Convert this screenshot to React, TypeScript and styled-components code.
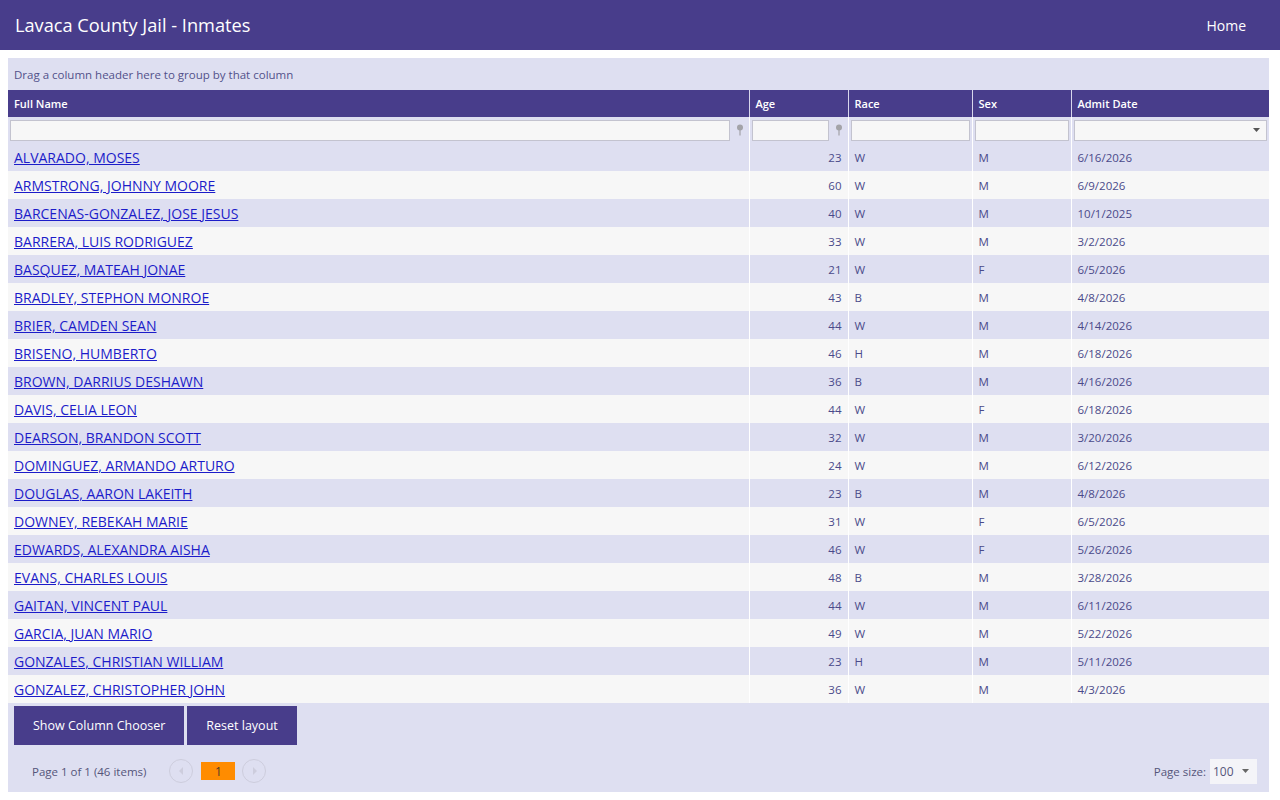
import React from 'react'
import styled, {createGlobalStyle} from 'styled-components'

const PURPLE = '#483d8b'
const LAVENDER = '#dedff1'
const LIGHT = '#f7f7f7'
const FONT = `'Open Sans', 'Noto Sans', 'Liberation Sans', sans-serif`

const GlobalStyle = createGlobalStyle`
  body {
    margin: 0;
    background: #fff;
    font-family: ${FONT};
  }
`

type Inmate = {name: string; age: number; race: string; sex: string; admit: string}

const inmates: Inmate[] = [
  {name: 'ALVARADO, MOSES', age: 23, race: 'W', sex: 'M', admit: '6/16/2026'},
  {name: 'ARMSTRONG, JOHNNY MOORE', age: 60, race: 'W', sex: 'M', admit: '6/9/2026'},
  {name: 'BARCENAS-GONZALEZ, JOSE JESUS', age: 40, race: 'W', sex: 'M', admit: '10/1/2025'},
  {name: 'BARRERA, LUIS RODRIGUEZ', age: 33, race: 'W', sex: 'M', admit: '3/2/2026'},
  {name: 'BASQUEZ, MATEAH JONAE', age: 21, race: 'W', sex: 'F', admit: '6/5/2026'},
  {name: 'BRADLEY, STEPHON MONROE', age: 43, race: 'B', sex: 'M', admit: '4/8/2026'},
  {name: 'BRIER, CAMDEN SEAN', age: 44, race: 'W', sex: 'M', admit: '4/14/2026'},
  {name: 'BRISENO, HUMBERTO', age: 46, race: 'H', sex: 'M', admit: '6/18/2026'},
  {name: 'BROWN, DARRIUS DESHAWN', age: 36, race: 'B', sex: 'M', admit: '4/16/2026'},
  {name: 'DAVIS, CELIA LEON', age: 44, race: 'W', sex: 'F', admit: '6/18/2026'},
  {name: 'DEARSON, BRANDON SCOTT', age: 32, race: 'W', sex: 'M', admit: '3/20/2026'},
  {name: 'DOMINGUEZ, ARMANDO ARTURO', age: 24, race: 'W', sex: 'M', admit: '6/12/2026'},
  {name: 'DOUGLAS, AARON LAKEITH', age: 23, race: 'B', sex: 'M', admit: '4/8/2026'},
  {name: 'DOWNEY, REBEKAH MARIE', age: 31, race: 'W', sex: 'F', admit: '6/5/2026'},
  {name: 'EDWARDS, ALEXANDRA AISHA', age: 46, race: 'W', sex: 'F', admit: '5/26/2026'},
  {name: 'EVANS, CHARLES LOUIS', age: 48, race: 'B', sex: 'M', admit: '3/28/2026'},
  {name: 'GAITAN, VINCENT PAUL', age: 44, race: 'W', sex: 'M', admit: '6/11/2026'},
  {name: 'GARCIA, JUAN MARIO', age: 49, race: 'W', sex: 'M', admit: '5/22/2026'},
  {name: 'GONZALES, CHRISTIAN WILLIAM', age: 23, race: 'H', sex: 'M', admit: '5/11/2026'},
  {name: 'GONZALEZ, CHRISTOPHER JOHN', age: 36, race: 'W', sex: 'M', admit: '4/3/2026'},
]

const TopBar = styled.header`
  height: 50px;
  background: ${PURPLE};
  display: flex;
  align-items: center;
  justify-content: space-between;
  padding: 0 34px 0 15px;
  color: #fff;
`

const Title = styled.h1`
  margin: 0;
  font-size: 18.2px;
  font-weight: 400;
`

const NavLink = styled.a`
  font-size: 14px;
  color: #fff;
  text-decoration: none;
`

const Grid = styled.div`
  width: 1261px;
  margin: 8px 0 0 8px;
  background: ${LAVENDER};
  color: #4a4a8a;
`

const GroupPanel = styled.div`
  height: 32px;
  display: flex;
  align-items: center;
  padding-left: 6px;
  font-size: 11.5px;
  color: #52518a;
`

const Table = styled.table`
  width: 100%;
  table-layout: fixed;
  border-collapse: collapse;
  font-size: 11.5px;
`

const HeadCell = styled.th`
  height: 27px;
  padding: 0 6px;
  text-align: left;
  background: ${PURPLE};
  color: #fff;
  font-size: 11px;
  font-weight: 600;
  border-left: 1px solid #d8d6ec;
  &:first-child {
    border-left: none;
  }
`

const FilterCell = styled.td`
  height: 26px;
  padding: 0 2px;
  background: ${LAVENDER};
  border-left: 1px solid #fff;
  &:first-child {
    border-left: none;
  }
`

const FilterBox = styled.div`
  display: flex;
  align-items: center;
  gap: 3px;
`

const FilterInput = styled.div`
  flex: 1;
  height: 19px;
  background: #f7f7f7;
  border: 1px solid #c3c3cf;
  display: flex;
  align-items: center;
  justify-content: flex-end;
  padding-right: 6px;
`

const PinWrap = styled.span`
  width: 14px;
  display: flex;
  justify-content: center;
`

const Row = styled.tr<{$alt: boolean}>`
  background: ${({$alt}) => ($alt ? LIGHT : LAVENDER)};
`

const Cell = styled.td<{$right?: boolean}>`
  height: 28px;
  padding: 0 6px;
  text-align: ${({$right}) => ($right ? 'right' : 'left')};
  border-left: 1px solid #fff;
  white-space: nowrap;
  &:first-child {
    border-left: none;
  }
`

const NameLink = styled.a`
  font-size: 14px;
  color: #1c1cc9;
  text-decoration: underline;
`

const Footer = styled.div`
  padding: 3px 6px 0;
`

const ButtonRow = styled.div`
  display: flex;
  gap: 3px;
`

const ActionButton = styled.button`
  height: 39px;
  padding: 0 19px;
  border: none;
  background: ${PURPLE};
  color: #fff;
  font-family: ${FONT};
  font-size: 12.5px;
`

const Pager = styled.div`
  height: 42px;
  margin-top: 5px;
  display: flex;
  align-items: center;
  padding-left: 24px;
  padding-right: 12px;
  font-size: 11.5px;
  color: #55557a;
`

const PagerSummary = styled.span`
  margin-right: 23px;
`

const CircleButton = styled.span`
  width: 24px;
  height: 24px;
  border-radius: 50%;
  border: 1.5px solid #cdcddd;
  box-sizing: border-box;
  display: flex;
  align-items: center;
  justify-content: center;
`

const CurrentPage = styled.span`
  width: 34px;
  height: 18px;
  margin: 0 7px 0 8px;
  background: #ff8c00;
  color: #4d3a2a;
  font-size: 12px;
  display: flex;
  align-items: center;
  justify-content: center;
`

const Spacer = styled.span`
  flex: 1;
`

const PageSize = styled.div`
  display: flex;
  align-items: center;
  gap: 4px;
`

const SizeSelect = styled.div`
  width: 47px;
  height: 25px;
  background: #f4f4f8;
  display: flex;
  align-items: center;
  justify-content: space-between;
  padding: 0 8px 0 3px;
  box-sizing: border-box;
  font-size: 12px;
`

const Pin = () => (
  <svg width="8" height="12" viewBox="0 0 8 12">
    <circle cx="4" cy="3.5" r="3" fill="#a3a3a8" />
    <rect x="3.4" y="6" width="1.2" height="5.5" fill="#a3a3a8" />
  </svg>
)

const Caret = ({color = '#555'}: {color?: string}) => (
  <svg width="7" height="4" viewBox="0 0 7 4">
    <path d="M0 0h7L3.5 4z" fill={color} />
  </svg>
)

const Arrow = ({dir}: {dir: 'left' | 'right'}) => (
  <svg width="5" height="8" viewBox="0 0 5 8">
    <path d={dir === 'left' ? 'M4 0v8L0 4z' : 'M1 0v8l4-4z'} fill="#cdcddd" />
  </svg>
)

export default function App() {
  return (
    <>
      <GlobalStyle />
      <TopBar>
        <Title>Lavaca County Jail - Inmates</Title>
        <NavLink href="#">Home</NavLink>
      </TopBar>
      <Grid>
        <GroupPanel>Drag a column header here to group by that column</GroupPanel>
        <Table>
          <colgroup>
            <col style={{width: 741}} />
            <col style={{width: 99}} />
            <col style={{width: 124}} />
            <col style={{width: 99}} />
            <col />
          </colgroup>
          <thead>
            <tr>
              <HeadCell>Full Name</HeadCell>
              <HeadCell>Age</HeadCell>
              <HeadCell>Race</HeadCell>
              <HeadCell>Sex</HeadCell>
              <HeadCell>Admit Date</HeadCell>
            </tr>
            <tr>
              <FilterCell>
                <FilterBox>
                  <FilterInput />
                  <PinWrap><Pin /></PinWrap>
                </FilterBox>
              </FilterCell>
              <FilterCell>
                <FilterBox>
                  <FilterInput />
                  <PinWrap><Pin /></PinWrap>
                </FilterBox>
              </FilterCell>
              <FilterCell>
                <FilterBox>
                  <FilterInput />
                </FilterBox>
              </FilterCell>
              <FilterCell>
                <FilterBox>
                  <FilterInput />
                </FilterBox>
              </FilterCell>
              <FilterCell>
                <FilterBox>
                  <FilterInput>
                    <Caret />
                  </FilterInput>
                </FilterBox>
              </FilterCell>
            </tr>
          </thead>
          <tbody>
            {inmates.map((p, i) => (
              <Row key={p.name} $alt={i % 2 === 1}>
                <Cell>
                  <NameLink href="#">{p.name}</NameLink>
                </Cell>
                <Cell $right>{p.age}</Cell>
                <Cell>{p.race}</Cell>
                <Cell>{p.sex}</Cell>
                <Cell>{p.admit}</Cell>
              </Row>
            ))}
          </tbody>
        </Table>
        <Footer>
          <ButtonRow>
            <ActionButton>Show Column Chooser</ActionButton>
            <ActionButton>Reset layout</ActionButton>
          </ButtonRow>
        </Footer>
        <Pager>
          <PagerSummary>Page 1 of 1 (46 items)</PagerSummary>
          <CircleButton>
            <Arrow dir="left" />
          </CircleButton>
          <CurrentPage>1</CurrentPage>
          <CircleButton>
            <Arrow dir="right" />
          </CircleButton>
          <Spacer />
          <PageSize>
            Page size:
            <SizeSelect>
              100
              <Caret color="#666" />
            </SizeSelect>
          </PageSize>
        </Pager>
      </Grid>
    </>
  )
}
